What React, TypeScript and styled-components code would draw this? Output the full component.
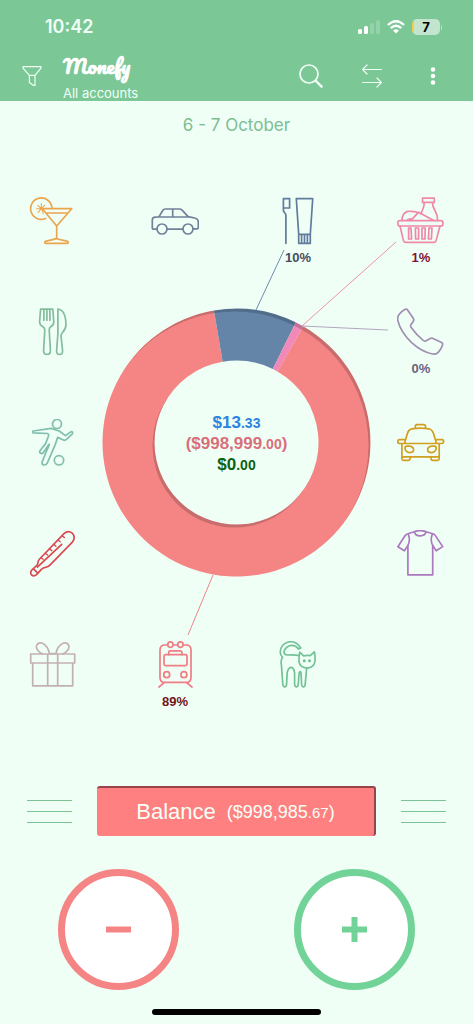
import React from "react";
import styled, { createGlobalStyle } from "styled-components";

const color = {
  page: "#f0fff6",
  bar: "#7bc796",
  barText: "#f0fff6",
  red: "#f58585",
  green: "#72d398",
  line: "#7cc496",
};

const GlobalStyle = createGlobalStyle`
  *, *::before, *::after { box-sizing: border-box; }
  body {
    margin: 0;
    background: ${color.page};
    font-family: Inter, "Noto Sans", sans-serif;
  }
  button {
    margin: 0;
    padding: 0;
    border: 0;
    background: none;
    font: inherit;
    color: inherit;
    cursor: pointer;
  }
  svg { display: block; }
`;

const Screen = styled.div`
  min-height: 100vh;
  display: flex;
  flex-direction: column;
  background: ${color.page};
`;

const Header = styled.header`
  display: flex;
  flex-direction: column;
  background: ${color.bar};
  color: ${color.barText};
`;

const StatusBar = styled.div`
  display: flex;
  align-items: center;
  justify-content: space-between;
  height: 54px;
  padding: 0 31px 0 45px;
`;

const Clock = styled.time`
  font-size: 18px;
  font-weight: 600;
  line-height: 24px;
`;

const StatusIcons = styled.div`
  display: flex;
  align-items: center;
  gap: 7px;
`;

const Battery = styled.div`
  display: flex;
  align-items: center;
  gap: 1px;
`;

const BatteryCell = styled.div`
  width: 28px;
  height: 16px;
  border-radius: 5px;
  overflow: hidden;
  background: linear-gradient(90deg, #f6ce45 2px, #c3e5d0 2px);
  color: #000;
  font-size: 13px;
  font-weight: 700;
  line-height: 16px;
  text-align: center;
`;

const BatteryTip = styled.div`
  width: 1px;
  height: 5px;
  border-radius: 0 2px 2px 0;
  background: #b4dfc3;
`;

const Toolbar = styled.div`
  display: flex;
  align-items: flex-start;
  height: 47px;
  padding: 0 28px 0 20px;
`;

const ToolButton = styled.button`
  display: grid;
  place-items: center;
  width: 24px;
  height: 44px;
`;

const Account = styled.div`
  flex: 1;
  display: flex;
  flex-direction: column;
  padding-left: 19px;
`;

const Brand = styled.h1`
  margin: 0;
  font-family: Pacifico, "Liberation Serif", cursive;
  font-size: 20px;
  font-weight: 700;
  line-height: 24px;
  color: #fff;
`;

const AccountName = styled.span`
  padding-top: 7px;
  font-size: 13px;
  line-height: 16px;
`;

const Tools = styled.div`
  display: flex;
  gap: 37px;
`;

const Period = styled.h2`
  margin: 0;
  font-size: 17px;
  font-weight: 400;
  line-height: 48px;
  text-align: center;
  color: #7cbd94;
`;

const Board = styled.main`
  display: grid;
  grid-template-columns: repeat(4, 48px);
  grid-template-rows: repeat(5, 70px);
  row-gap: 41px;
  justify-content: space-between;
  width: 100%;
  max-width: 520px;
  margin: 48px auto 0;
  padding: 0 28px;
`;

const Chart = styled.svg`
  grid-area: 1 / 1 / -1 / -1;
  width: 100%;
  height: 100%;
`;

const Totals = styled.div`
  grid-area: 3 / 2 / 4 / 4;
  display: flex;
  flex-direction: column;
  justify-content: center;
  align-items: center;
  height: 48px;
`;

const Total = styled.span<{ $tone: string }>`
  font-family: "Liberation Sans", Arial, sans-serif;
  font-size: 17px;
  font-weight: 700;
  line-height: 21px;
  color: ${(p) => p.$tone};
`;

const Cents = styled.small`
  font-size: 14px;
  line-height: 1;
`;

const CategoryButton = styled.button<{ $tint: string; $row: number; $col: number }>`
  grid-row: ${(p) => p.$row};
  grid-column: ${(p) => p.$col};
  display: flex;
  flex-direction: column;
  align-items: center;
  gap: 4px;
  color: ${(p) => p.$tint};
`;

const Share = styled.span<{ $tone: string }>`
  font-family: "Liberation Sans", Arial, sans-serif;
  font-size: 13px;
  font-weight: 700;
  line-height: 18px;
  color: ${(p) => p.$tone};
`;

const Glyph = styled.svg`
  width: 48px;
  height: 48px;
  fill: none;
  stroke: currentColor;
  stroke-width: 1.7;
  stroke-linecap: round;
  stroke-linejoin: round;
`;

const BalanceRow = styled.div`
  display: flex;
  align-items: center;
  gap: 25px;
  margin-top: 75px;
  padding: 0 27px;
`;

const MenuButton = styled.button`
  display: flex;
  flex-direction: column;
  gap: 10px;
  width: 45px;
`;

const MenuLine = styled.span`
  width: 100%;
  height: 1px;
  background: ${color.line};
`;

const BalanceButton = styled.button`
  flex: 1;
  display: flex;
  align-items: center;
  justify-content: center;
  gap: 11px;
  height: 50px;
  border-top: 2px solid #96434a;
  border-right: 2px solid #96434a;
  border-radius: 3px;
  background: #ff8080;
  font-family: "Liberation Sans", Arial, sans-serif;
  color: #f6fff8;
`;

const BalanceLabel = styled.span`
  font-size: 22px;
  line-height: 28px;
`;

const BalanceAmount = styled.span`
  font-size: 18px;
  line-height: 28px;
`;

const BalanceCents = styled.small`
  font-size: 15px;
`;

const Actions = styled.div`
  display: grid;
  grid-template-columns: 1fr 1fr;
  justify-items: center;
  margin-top: 33px;
`;

const RoundButton = styled.button<{ $tone: string }>`
  display: grid;
  place-items: center;
  width: 121px;
  height: 121px;
  border: 7px solid ${(p) => p.$tone};
  border-radius: 50%;
  background: #fff;
  color: ${(p) => p.$tone};
`;

const HomeIndicator = styled.div`
  width: 169px;
  height: 6px;
  margin: 19px auto 9px;
  border-radius: 3px;
  background: #000;
`;

type Category = {
  name: string;
  row: number;
  col: number;
  tint: string;
  share?: string;
  tone?: string;
  art: React.ReactNode;
};

const categories: Category[] = [
  {
    name: "Entertainment", row: 1, col: 1, tint: "#eba54e",
    art: (
      <>
        <path d="M17.6 21.5A10.7 10.7 0 1 1 24 11" />
        <path d="M14.3 11.7h29.4l-15 17.3zM18.2 16h21.4M28.7 29v12.4M28.7 41.4c-3.6 1.6-7.4 1.8-11.2 2.8-1 .6-1 2 0 2.2h22c1-.2 1-1.6 0-2.2-3.6-1-7.4-1.2-10.8-2.8z" />
        <path d="M13.3 11.7V6.6M13.3 11.7H8.6M13.3 11.7l-3.2 3.6M13.3 11.7l-3.4-3.4M13.3 11.7l3.4-3.4M14 12.4l1.2 4" strokeWidth="1.1" />
      </>
    ),
  },
  {
    name: "Car", row: 1, col: 2, tint: "#72819a",
    art: (
      <>
        <path d="M6 32.2H2.6q-1.3 0-1.3-1.4V23q0-2.6 3-2.8l3.6-.3 4-6.6q.8-1.3 2.4-1.3h14q1.6 0 2.8 1.2l6 6.4 6.6 1.4q3.6.8 3.6 3.6v6q0 1.2-1.3 1.2h-4M16 32.2h16M8 20h29M21.7 12v8" />
        <circle cx="11" cy="32" r="5" />
        <circle cx="37" cy="32" r="5" />
      </>
    ),
  },
  {
    name: "Toiletry", row: 1, col: 3, tint: "#5f7c9c", share: "10%", tone: "#454c5e",
    art: (
      <>
        <path d="M9.4 1.7h6.2V11h-5M9.4 1.7V13q0 1.4 1 2.4 1.5 1.3 1.5 3V46.3" />
        <path d="M22.3 1.7h16.4l-2.4 35.6H24.7zM24.7 37.3v9h11.6v-9M27.6 38v8M30.5 38v8M33.4 38v8" />
      </>
    ),
  },
  {
    name: "Food", row: 1, col: 4, tint: "#f088ab", share: "1%", tone: "#7d1236",
    art: (
      <>
        <rect x=".9" y="23.6" width="45" height="5.4" rx="2" />
        <path d="M3 29l3.4 14.4q.6 2 2.6 2h27.6q2 0 2.6-2L43 29" />
        <path d="M11.6 31v11h3l-.6-11zM18.4 31l.2 11h3V31zM25 31v11h3l.2-11zM32 31l-.6 11h3L35 31z" />
        <path d="M25.5 1.2h11.8v4.2H25.5zM27.2 5.4q.4 3.6-2 8.4l-1.6 3M35.4 5.4q0 4 2.8 8.6 2.4 4 2.4 9.4" />
        <path d="M5 23.4c0-4 1.8-7.6 5-8.8 2-.8 4-.2 6 0 1.6-.2 3 0 4 .8M14 23.4l7.6-8.2 14.6 8M14.6 22q-2.4-.6-4.4 1.2" />
      </>
    ),
  },
  {
    name: "Eating out", row: 2, col: 1, tint: "#82bd9d",
    art: (
      <>
        <path d="M12.6 1.2h12.2l1 12.6q0 3.4-3 5-1.6 1-1.6 3l1.2 20.6q0 4-3.4 4t-3.4-4L16.8 22q0-2-1.6-3-3.6-1.8-3.600-5.200zM15.900 1.200v11M18.900 1.200v11M21.900 1.200v11" />
        <path d="M29.9 1v24.6l-1.3 17q-.2 3.8 3 3.8t3-3.8L33 28q0-1.6 1.4-3.2Q38 20.6 38 16.4 37.6 2 29.9 1z" />
      </>
    ),
  },
  {
    name: "Communications", row: 2, col: 4, tint: "#a08fb0", share: "0%", tone: "#6b6280",
    art: (
      <path d="M8.2 1.2Q9.600 .6 10.600 2L16.400 10.600Q17.200 12 16.200 13.400L13.800 16.800Q13.200 18 14.200 19.400Q20 27.400 26.200 32.400Q27.800 33.600 29.200 32.800L33.200 30.600Q34.600 29.800 36 30.400L44.600 34.400Q46 35.200 45.600 36.800Q43.600 42.600 40.200 45.200Q38.400 46.400 35.600 46Q25 44 14.600 34.600Q3.600 24 .8 12.400Q.2 9.200 2 6.600Q4.600 3 8.200 1.200z" />
    ),
  },
  {
    name: "Sports", row: 3, col: 1, tint: "#80bfae",
    art: (
      <>
        <circle cx="29" cy="5" r="4.500" />
        <circle cx="31" cy="41.300" r="4.700" />
        <path d="M5.200 12Q4.200 12.600 5 13.900L19.600 14.500Q21 15 20.600 16.800L17.600 24.600L11.600 32.200Q11.400 34.400 13.400 34.600Q15 34.600 15.800 33L20 26.600Q20.800 25.400 21.400 25.200Q20.200 29 18.600 31.800L14 43.400Q14 45.800 16.400 46Q18.400 46 19.400 43.800L27.200 25.600L29.700 18.400L36 21.200Q37.400 21.400 38.400 20.400L44.400 14.800Q45.200 12.600 43.200 12.600L37.400 16.600L31.600 12.200L23.400 9.400z" />
      </>
    ),
  },
  {
    name: "Taxi", row: 3, col: 4, tint: "#d19f20",
    art: (
      <>
        <path d="M18.300 9V7.400q0-1.800 1.800-1.800h6.600q1.800 0 1.800 1.800V9" />
        <path d="M7.600 24l2.800-9.600q1-3.600 4.400-4.600 8.600-1.400 17.200 0 3.200.8 4.400 4.400L39.400 24" />
        <path d="M7.300 20.700H2.600q-1.900.2-1.900 1.900t1.900 1.900h42.200q1.900-.2 1.900-1.900t-1.900-1.900h-5" />
        <path d="M4.900 24.500v15.300q0 1.600 1.600 1.600h5q1.600 0 1.600-1.600v-2M42.200 24.500v15.300q0 1.600-1.600 1.600h-5q-1.600 0-1.600-1.600v-2M4.900 37.800h37.300" />
        <path d="M8 29q0-1.800 2-1.800h2.400q4.200.6 4.200 3.400 0 3-3.600 3-4.800-.4-5-4.600zM39.200 29q0-1.800-2-1.800h-2.400q-4.200.6-4.200 3.400 0 3 3.600 3 4.800-.4 5-4.600z" />
      </>
    ),
  },
  {
    name: "Health", row: 4, col: 1, tint: "#d94a52",
    art: (
      <>
        <path d="M10 32.200q.2-1.800 1.600-3.200L36 3.600q4.200-3.600 8.200-.4 3.800 4 .4 8.600L22.400 34.600q-2 2.400-5 2.800-2.400.2-3.800 1.800l-4.800 5.200q-2.800 2.600-5.200.6-2-2.400.4-5.200l4.800-4.400q1.200-1.400 1.200-3.200z" />
        <path d="M33.700 14.300L9.400 37.200M5.800 39.200l3.400 3.400" />
        <path d="M13 27.600l2.200 1.600M17.200 23.200l2.400 1.800M21.400 18.800l2.400 1.800M25.600 14.400l2.400 1.800M29.800 10l2.400 1.800M34 5.800l2.400 1.800" strokeWidth="1.400" />
      </>
    ),
  },
  {
    name: "Clothes", row: 4, col: 4, tint: "#ac79c0",
    art: (
      <>
        <path d="M17.400 1.700Q23.200-.4 29 1.700Q28.400 5.800 23.200 5.900T17.400 1.700z" />
        <path d="M17.400 1.700L10.800 3.700Q9 4.200 8 5.800L.9 16.800L7.400 20.800L10.900 15.400V44.800H35.700V15.400L39.200 20.800L45.700 16.600L38.400 5.600Q37.600 4.200 35.800 3.700L29 1.700" />
        <path d="M11.400 4.600Q13.600 10 10.900 15.400M35.200 4.600Q33 10 35.700 15.400" />
      </>
    ),
  },
  {
    name: "Gifts", row: 5, col: 1, tint: "#c3b0b4",
    art: (
      <>
        <path d="M2.700 13h44v9h-44zM4.700 22v22.800h40V22M19.700 13v31.800M29.700 13v31.800" />
        <path d="M21.600 13Q20 4.600 13.800 2Q9.400 1.200 8.400 5.400Q8.200 9.800 14.600 13M27.800 13Q29.400 4.600 35.600 2Q40 1.200 41 5.400Q41.200 9.800 34.800 13M21.600 12.600h6.200" />
      </>
    ),
  },
  {
    name: "Transport", row: 5, col: 2, tint: "#ef7d82", share: "89%", tone: "#741518",
    art: (
      <>
        <path d="M16.600 4H14q-5 0-5 5v27.400q0 5 5 5h21q5 0 5-5V9q0-5-5-5h-2.800M22.200 4h4.200" />
        <circle cx="19.400" cy="3.600" r="2.700" />
        <circle cx="29.400" cy="3.600" r="2.700" />
        <rect x="13" y="13.600" width="23" height="11" rx="1.600" />
        <path d="M17.700 13.600v-2q0-1.800 1.800-1.800h9.600q1.800 0 1.800 1.800v2M13.200 41.600L8 46M35.600 41.600l5.400 4.400" />
        <circle cx="15.700" cy="33.700" r="3" />
        <circle cx="32.900" cy="33.700" r="3" />
      </>
    ),
  },
  {
    name: "Pets", row: 5, col: 3, tint: "#72c296",
    art: (
      <>
        <path d="M26.600 7Q22-.6 14.400 1Q6.600 3.200 6.200 11Q6.400 14.600 8.600 16.200Q6.400 19 7.400 23.600L8.800 43.400Q9.200 46 11 45.800Q12.600 45.600 12.600 43L13.200 31.400Q14.400 26.400 17.400 26.400Q20.200 27.400 20.600 32V43.400Q21 46 22.600 45.800Q24 45.600 24.200 43.400L25.200 31.600Q26.400 29.600 27 31.800L27.600 43.600Q28 46 29.600 45.800Q31 45.600 31.200 43.400L32.600 27.400" />
        <path d="M24.600 8Q20.600 3 15.400 4.800Q10 7.400 10 11.400Q10.400 14 13.400 14Q18.800 13.400 24.600 14.400M26.600 7L24.600 8" />
        <path d="M25.800 11.200L29.600 14.800Q33 14 36.200 14.600L40.400 10.800Q41.400 15.600 41 20.600Q39.600 26.400 33.400 27.200Q26 26.600 25 20.600Q24.800 15 25.800 11.200z" />
        <circle cx="30.300" cy="19.700" r=".7" />
        <circle cx="35.500" cy="19.700" r=".7" />
      </>
    ),
  },
];

const CX = 208.5;
const CY = 245.5;
const OUTER = 134;
const INNER = 82;

const point = (deg: number, r: number) => {
  const a = (deg * Math.PI) / 180;
  return `${(CX + r * Math.sin(a)).toFixed(2)} ${(CY - r * Math.cos(a)).toFixed(2)}`;
};

const sector = (from: number, to: number) => {
  const large = to - from > 180 ? 1 : 0;
  return `M${point(from, OUTER)}A${OUTER} ${OUTER} 0 ${large} 1 ${point(to, OUTER)}L${point(to, INNER)}A${INNER} ${INNER} 0 ${large} 0 ${point(from, INNER)}z`;
};

const slices = [
  { from: 29.9, to: 350.3, fill: "#f58585" },
  { from: -9.7, to: 26.3, fill: "#6585a8" },
  { from: 26.3, to: 29.9, fill: "#f088b8" },
];

function Donut() {
  return (
    <Chart viewBox="0 0 417 514" role="img" aria-label="Spending by category">
      <defs>
        <mask id="depth" maskUnits="userSpaceOnUse" x="0" y="0" width="417" height="514">
          <circle cx={CX} cy={CY} r={OUTER} fill="#fff" />
          <circle cx={CX - 2} cy={CY + 3} r={OUTER} fill="#000" />
          <circle cx={CX - 2} cy={CY + 3} r={INNER} fill="#fff" />
          <circle cx={CX} cy={CY} r={INNER} fill="#000" />
        </mask>
      </defs>
      {slices.map((s) => (
        <path key={s.fill} d={sector(s.from, s.to)} fill={s.fill} />
      ))}
      <circle cx={CX} cy={CY} r={OUTER} fill="#000" fillOpacity=".18" mask="url(#depth)" />
      <path d="M228 113L256 53" stroke="#6f8bab" />
      <path d="M274 129L368 45" stroke="#ec92ad" />
      <path d="M274 129L360 133" stroke="#b3a6c0" />
      <path d="M185 378L160 438" stroke="#ee8488" />
    </Chart>
  );
}

export default function App() {
  return (
    <Screen>
      <GlobalStyle />
      <Header>
        <StatusBar>
          <Clock>10:42</Clock>
          <StatusIcons>
            <svg width="22" height="14" viewBox="0 0 22 14" fill="#fff" aria-label="Signal">
              <rect x="0" y="9" width="4" height="5" rx="1.500" />
              <rect x="6" y="6" width="4" height="8" rx="1.500" />
              <rect x="12" y="3" width="4" height="11" rx="1.500" opacity=".2" />
              <rect x="18" y="0" width="4" height="14" rx="1.500" opacity=".2" />
            </svg>
            <svg width="18" height="14" viewBox="0 0 18 14" fill="none" stroke="#fff" strokeWidth="2.300" aria-label="Wi-Fi">
              <path d="M.9 5Q9-2.600 17.100 5M3.700 8.200Q9 3.200 14.300 8.200" />
              <path d="M6 10.500Q9 7.800 12 10.500L9 13.600z" fill="#fff" stroke="none" />
            </svg>
            <Battery>
              <BatteryCell>7</BatteryCell>
              <BatteryTip />
            </Battery>
          </StatusIcons>
        </StatusBar>
        <Toolbar>
          <ToolButton aria-label="Filter">
            <svg width="20" height="22" viewBox="0 0 20 22" fill="none" stroke="currentColor" strokeWidth="1.200" strokeLinejoin="round">
              <path d="M1 1.600h18v1.600l-6 7.200v10h-1.400L7.400 17.600v-7.200L1 3.200zM7.400 10.400H13" />
            </svg>
          </ToolButton>
          <Account>
            <Brand>Monefy</Brand>
            <AccountName>All accounts</AccountName>
          </Account>
          <Tools>
            <ToolButton aria-label="Search">
              <svg width="24" height="24" viewBox="0 0 24 24" fill="none" stroke="currentColor" strokeLinecap="round">
                <circle cx="10" cy="10" r="9" strokeWidth="1.700" />
                <path d="M16.600 16.600l6 6" strokeWidth="2.400" />
              </svg>
            </ToolButton>
            <ToolButton aria-label="Transfer">
              <svg width="20" height="24" viewBox="0 0 20 24" fill="none" stroke="currentColor" strokeWidth="1.200" strokeLinecap="round" strokeLinejoin="round">
                <path d="M19.400 5.500H.8M5 1L.6 5.500 5 10M.6 18.500h18.600M15 14l4.400 4.500L15 23" />
              </svg>
            </ToolButton>
            <ToolButton aria-label="More">
              <svg width="6" height="20" viewBox="0 0 6 20" fill="#fff">
                <circle cx="3" cy="3.500" r="2.300" />
                <circle cx="3" cy="10" r="2.300" />
                <circle cx="3" cy="16.500" r="2.300" />
              </svg>
            </ToolButton>
          </Tools>
        </Toolbar>
      </Header>

      <Period>6 - 7 October</Period>

      <Board>
        <Donut />
        <Totals>
          <Total $tone="#2b84e0">$13<Cents>.33</Cents></Total>
          <Total $tone="#d8707a">($998,999<Cents>.00</Cents>)</Total>
          <Total $tone="#0b6312">$0<Cents>.00</Cents></Total>
        </Totals>
        {categories.map((c) => (
          <CategoryButton key={c.name} aria-label={c.name} $tint={c.tint} $row={c.row} $col={c.col}>
            <Glyph viewBox="0 0 48 48" aria-hidden="true">{c.art}</Glyph>
            {c.share && <Share $tone={c.tone ?? c.tint}>{c.share}</Share>}
          </CategoryButton>
        ))}
      </Board>

      <BalanceRow>
        <MenuButton aria-label="Open categories">
          <MenuLine />
          <MenuLine />
          <MenuLine />
        </MenuButton>
        <BalanceButton>
          <BalanceLabel>Balance</BalanceLabel>
          <BalanceAmount>($998,985<BalanceCents>.67</BalanceCents>)</BalanceAmount>
        </BalanceButton>
        <MenuButton aria-label="Open transactions">
          <MenuLine />
          <MenuLine />
          <MenuLine />
        </MenuButton>
      </BalanceRow>

      <Actions>
        <RoundButton $tone={color.red} aria-label="Add expense">
          <svg width="25" height="25" viewBox="0 0 25 25" fill="currentColor">
            <rect x="0" y="9.500" width="25" height="6" />
          </svg>
        </RoundButton>
        <RoundButton $tone={color.green} aria-label="Add income">
          <svg width="25" height="25" viewBox="0 0 25 25" fill="currentColor">
            <path d="M9.500 0h6v9.500H25v6h-9.500V25h-6v-9.500H0v-6h9.500z" />
          </svg>
        </RoundButton>
      </Actions>

      <HomeIndicator />
    </Screen>
  );
}
